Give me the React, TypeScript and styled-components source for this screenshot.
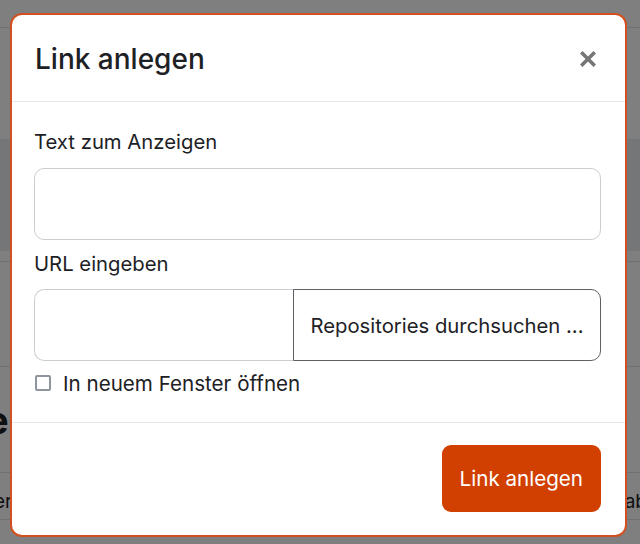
import React from "react";
import styled, { createGlobalStyle } from "styled-components";

const Global = createGlobalStyle`
  html, body { margin: 0; padding: 0; }
  body { font-family: Inter, "Liberation Sans", sans-serif; background: #fff; color: #1d2125; }
  * { box-sizing: border-box; }
`;

const Page = styled.div`
  position: relative;
  width: 640px;
  height: 544px;
  overflow: hidden;
  background: #fff;
`;

const Band = styled.div<{ $h: number; $bg?: string; $border?: boolean; $align?: string }>`
  height: ${(p) => p.$h}px;
  background: ${(p) => p.$bg || "transparent"};
  border-bottom: ${(p) => (p.$border ? "1px solid #dee2e6" : "none")};
  display: flex;
  align-items: ${(p) => p.$align || "center"};
  justify-content: space-between;
  font-size: 19px;
  color: #1d2125;
`;

const BgLink = styled.span`
  color: #0f47ad;
  margin-left: -10px;
  margin-bottom: 22px;
`;

const BgHeading = styled.span`
  font-size: 38px;
  font-weight: 700;
  margin-left: -14px;
`;

const BgText = styled.span<{ $side: "l" | "r" }>`
  margin-left: ${(p) => (p.$side === "l" ? "-6px" : "0")};
  margin-right: ${(p) => (p.$side === "r" ? "-7px" : "0")};
  margin-top: 10px;
`;

const Overlay = styled.div`
  position: absolute;
  inset: 0;
  background: rgba(0, 0, 0, 0.5);
`;

const Modal = styled.div`
  position: absolute;
  left: 10px;
  top: 13px;
  width: 617px;
  height: 524px;
  background: #fff;
  border: 2px solid #d2501f;
  border-radius: 12px;
  display: flex;
  flex-direction: column;
  overflow: hidden;
`;

const Header = styled.div`
  height: 87px;
  flex: none;
  display: flex;
  align-items: center;
  justify-content: space-between;
  padding: 2px 27px 0 23px;
  border-bottom: 1px solid #e3e7ea;
`;

const Title = styled.h5`
  margin: 0;
  font-size: 28px;
  font-weight: 500;
  color: #1d2125;
`;

const Close = styled.button`
  border: none;
  background: none;
  padding: 0;
  width: 20px;
  height: 20px;
  display: flex;
  align-items: center;
  justify-content: center;
  cursor: pointer;
`;

const Body = styled.div`
  flex: 1;
  padding: 26px 24px 0 22px;
  display: flex;
  flex-direction: column;
  border-bottom: 1px solid #e3e7ea;
`;

const Label = styled.label<{ $mt?: number; $mb?: number }>`
  display: block;
  font-size: 20.3px;
  line-height: 28px;
  margin-top: ${(p) => p.$mt || 0}px;
  margin-bottom: ${(p) => p.$mb ?? 12}px;
  color: #1d2125;
`;

const TextInput = styled.input`
  display: block;
  width: 100%;
  height: 72px;
  border: 1px solid #c9ced3;
  border-radius: 10px;
  font-size: 20px;
  padding: 0 16px;
  outline: none;
`;

const Group = styled.div`
  display: flex;
  height: 72px;
`;

const GroupInput = styled.input`
  width: 259px;
  flex: none;
  height: 100%;
  border: 1px solid #c9ced3;
  border-right: none;
  border-radius: 10px 0 0 10px;
  outline: none;
  font-size: 20px;
  padding: 0 16px;
`;

const GroupButton = styled.button`
  flex: 1;
  min-width: 0;
  height: 100%;
  border: 1px solid #5d6166;
  border-radius: 0 10px 10px 0;
  background: #fff;
  font-family: inherit;
  font-size: 20.3px;
  color: #1d2125;
  padding: 0 8px;
  white-space: nowrap;
  text-align: center;
`;

const CheckRow = styled.label`
  display: flex;
  align-items: center;
  gap: 12px;
  height: 28px;
  margin-top: 8px;
  margin-left: 1px;
  font-size: 20.6px;
  color: #1d2125;
`;

const Box = styled.span`
  width: 16px;
  height: 16px;
  border: 2px solid #8f959e;
  border-radius: 2px;
  background: #fff;
  flex: none;
`;

const Footer = styled.div`
  height: 112px;
  flex: none;
  display: flex;
  align-items: center;
  justify-content: flex-end;
  padding: 0 24px 1px;
`;

const Primary = styled.button`
  height: 67px;
  padding: 0 18px;
  border: none;
  border-radius: 9px;
  background: #d14000;
  color: #fff;
  font-family: inherit;
  font-size: 20.6px;
`;

export default function App() {
  return (
    <>
      <Global />
      <Page>
        <Band $h={28} $border />
        <Band $h={111} />
        <Band $h={112} $bg="#e9ecef" />
        <Band $h={11} $border />
        <Band $h={105} $border $align="flex-end">
          <BgLink>i</BgLink>
        </Band>
        <Band $h={106} $border>
          <BgHeading>e</BgHeading>
        </Band>
        <Band $h={47} $border>
          <BgText $side="l">er</BgText>
          <BgText $side="r">ab</BgText>
        </Band>
        <Overlay />
        <Modal role="dialog" aria-label="Link anlegen">
          <Header>
            <Title>Link anlegen</Title>
            <Close aria-label="Schließen">
              <svg width="16" height="16" viewBox="0 0 16 16">
                <path d="M2.5 2.5 L13.5 13.5 M13.5 2.5 L2.5 13.5" stroke="#767676" strokeWidth="3.6" strokeLinecap="square" />
              </svg>
            </Close>
          </Header>
          <Body>
            <Label>Text zum Anzeigen</Label>
            <TextInput />
            <Label $mt={10} $mb={11}>URL eingeben</Label>
            <Group>
              <GroupInput />
              <GroupButton>Repositories durchsuchen ...</GroupButton>
            </Group>
            <CheckRow>
              <Box />
              In neuem Fenster öffnen
            </CheckRow>
          </Body>
          <Footer>
            <Primary>Link anlegen</Primary>
          </Footer>
        </Modal>
      </Page>
    </>
  );
}
